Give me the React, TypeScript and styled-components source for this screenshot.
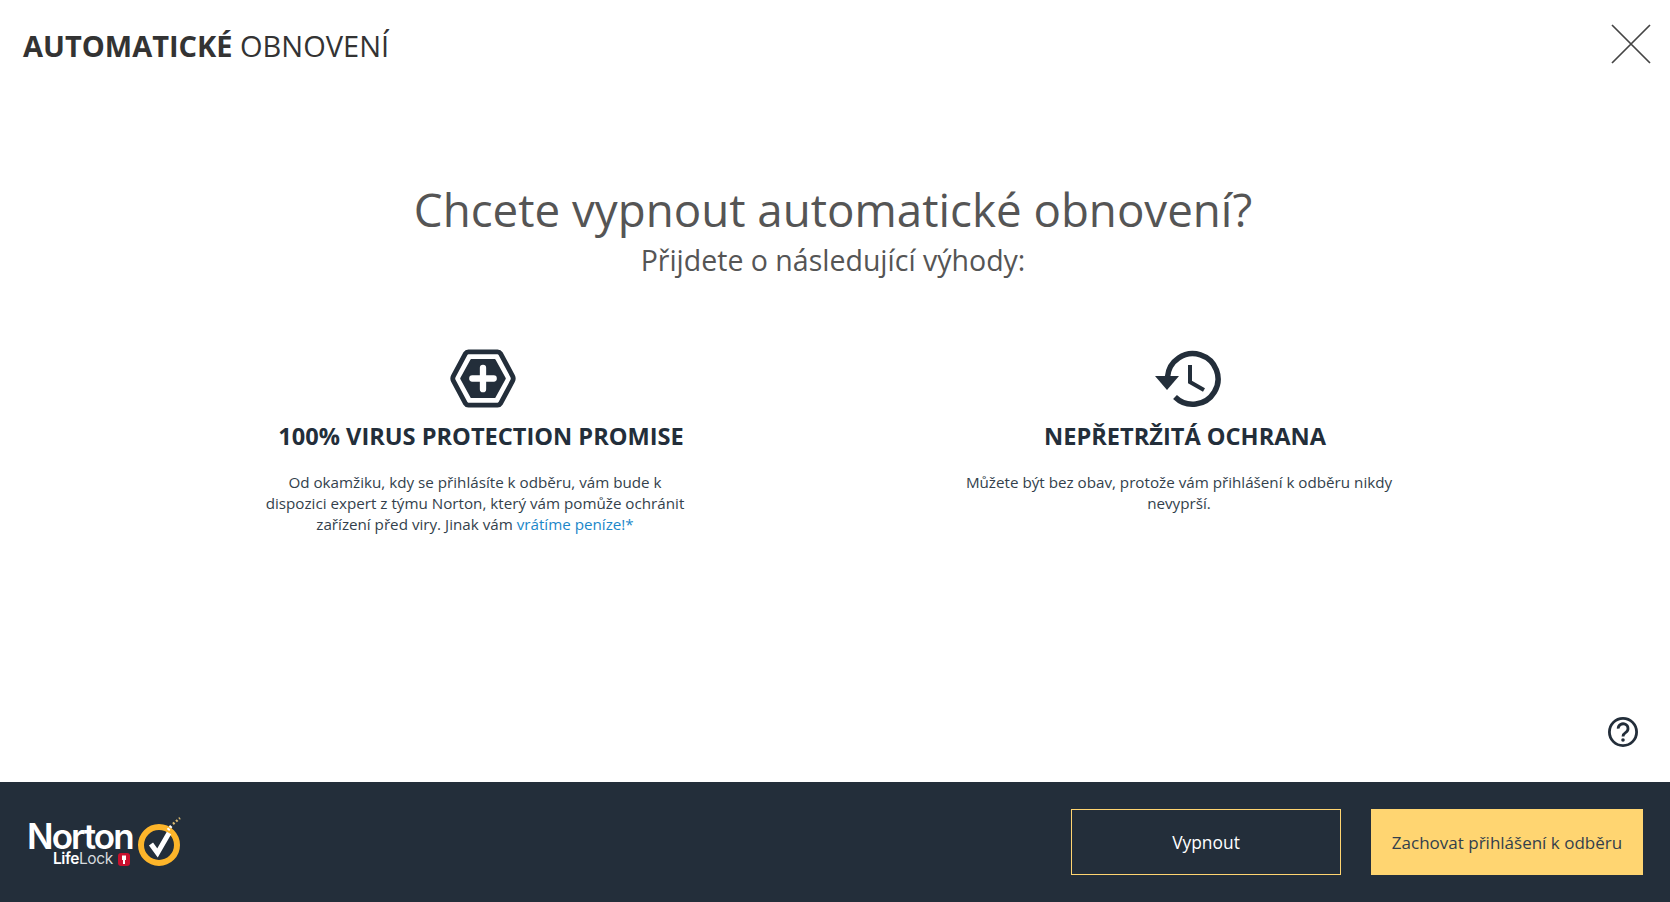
import styled, { createGlobalStyle } from 'styled-components';

const GlobalStyle = createGlobalStyle`
  html, body {
    margin: 0;
    padding: 0;
    background: #ffffff;
    font-family: 'Open Sans', 'Noto Sans', sans-serif;
  }
`;

export default function App() {
  return (
    <Page>
      <GlobalStyle />
      <Header>
        <PageTitle>
          <strong>AUTOMATICKÉ</strong> OBNOVENÍ
        </PageTitle>
        <CloseButton aria-label="Zavřít">
          <svg width="40" height="40" viewBox="0 0 40 40">
            <path d="M1 1 L39 39 M39 1 L1 39" stroke="#444" strokeWidth="1.7" fill="none" />
          </svg>
        </CloseButton>
      </Header>

      <Main>
        <Question>Chcete vypnout automatické obnovení?</Question>
        <SubQuestion>Přijdete o následující výhody:</SubQuestion>

        <Features>
          <Feature>
            <FeatureIcon $offset={3}>
              <svg width="66" height="61" viewBox="0 0 68 62">
                <path
                  d="M19 3.5 H49 Q51 3.5 52 5.2 L64.5 28.5 Q65.8 31 64.5 33.5 L52 56.8 Q51 58.5 49 58.5 H19 Q17 58.5 16 56.8 L3.5 33.5 Q2.2 31 3.5 28.5 L16 5.2 Q17 3.5 19 3.5 Z"
                  fill="none"
                  stroke="#232e3a"
                  strokeWidth="5"
                />
                <path
                  d="M22 12 H46 L56.5 31 L46 50 H22 L11.5 31 Z"
                  fill="#232e3a"
                  stroke="#232e3a"
                  strokeWidth="2"
                  strokeLinejoin="round"
                />
                <path d="M34 20 V42 M23 31 H45" stroke="#fff" strokeWidth="6.5" strokeLinecap="round" />
              </svg>
            </FeatureIcon>
            <FeatureTitle>100% VIRUS PROTECTION PROMISE</FeatureTitle>
            <FeatureText>
              Od okamžiku, kdy se přihlásíte k odběru, vám bude k dispozici expert z týmu Norton, který vám pomůže
              ochránit zařízení před viry. Jinak vám <TextLink href="#">vrátíme peníze!*</TextLink>
            </FeatureText>
          </Feature>
          <Feature>
            <FeatureIcon $offset={6}>
              <svg width="68" height="62" viewBox="0 0 68 62">
                <path
                  d="M13.5 29 A25.3 25.3 0 1 1 21 49"
                  fill="none"
                  stroke="#232e3a"
                  strokeWidth="5.5"
                />
                <path d="M1 28 H25 L13 42 Z" fill="#232e3a" />
                <path d="M36 17 V34 L50 42" fill="none" stroke="#232e3a" strokeWidth="4" />
              </svg>
            </FeatureIcon>
            <FeatureTitle>NEPŘETRŽITÁ OCHRANA</FeatureTitle>
            <FeatureText>
              Můžete být bez obav, protože vám přihlášení k odběru nikdy nevyprší.
            </FeatureText>
          </Feature>
        </Features>

        <HelpRow>
          <svg width="32" height="32" viewBox="0 0 32 32" aria-label="Nápověda">
            <circle cx="16" cy="16" r="13.6" fill="none" stroke="#232e3a" strokeWidth="2.8" />
            <path
              d="M11.2 12.6 A4.9 4.7 0 1 1 18.8 16.4 C17 17.6 16 18.4 16 20.4"
              fill="none"
              stroke="#232e3a"
              strokeWidth="2.8"
            />
            <circle cx="16" cy="24" r="1.8" fill="#232e3a" />
          </svg>
        </HelpRow>
      </Main>

      <Footer>
        <Logo>
          <LogoWords>
            <LogoNorton>Norton</LogoNorton>
            <LogoSub>
              <b>Life</b>Lock
              <LogoBadge>
                <svg width="6" height="9" viewBox="0 0 6 9">
                  <path d="M1 0.5 H5 V5 H4 V9 H2 V5 H1 Z" fill="#fff" />
                </svg>
              </LogoBadge>
            </LogoSub>
          </LogoWords>
          <svg width="48" height="50" viewBox="0 0 48 50">
            <circle cx="23" cy="29" r="18" fill="none" stroke="#fdb52a" strokeWidth="6" />
            <path d="M15 28 L21.5 37 L33 17" fill="none" stroke="#fff" strokeWidth="5" />
            <path d="M32 14 L36 9" stroke="#fff" strokeWidth="3" strokeDasharray="2 1.2" />
            <path d="M37 8 L44 2" stroke="#d9b870" strokeWidth="2.4" strokeDasharray="2 2" />
          </svg>
        </Logo>
        <Actions>
          <OutlineButton>Vypnout</OutlineButton>
          <SolidButton>Zachovat přihlášení k odběru</SolidButton>
        </Actions>
      </Footer>
    </Page>
  );
}

const Page = styled.div`
  width: 100%;
  height: 902px;
  display: flex;
  flex-direction: column;
  overflow: hidden;
`;

const Header = styled.header`
  height: 92px;
  display: flex;
  justify-content: space-between;
  align-items: flex-start;
  padding: 24px 19px 0 23px;
  box-sizing: border-box;
`;

const PageTitle = styled.h1`
  margin: 5px 0 0;
  font-size: 29px;
  line-height: 34px;
  font-weight: 400;
  color: #333333;

  strong {
    font-weight: 700;
  }
`;

const CloseButton = styled.button`
  padding: 0;
  width: 40px;
  height: 40px;
  border: 0;
  background: none;
`;

const Main = styled.main`
  flex: 1;
  display: flex;
  flex-direction: column;
  align-items: center;
  padding: 87px 4px 0 0;
`;

const Question = styled.h2`
  margin: 0;
  font-size: 45.7px;
  line-height: 60px;
  font-weight: 400;
  color: #555555;
`;

const SubQuestion = styled.p`
  margin: 3px 0 0;
  font-size: 28.5px;
  line-height: 37px;
  color: #555555;
`;

const Features = styled.div`
  margin-top: 69px;
  display: grid;
  grid-template-columns: 704px 704px;
`;

const Feature = styled.section`
  display: flex;
  flex-direction: column;
  align-items: center;
`;

const FeatureIcon = styled.div<{ $offset: number }>`
  height: 62px;
  margin-left: ${(props) => props.$offset}px;
  line-height: 0;
`;

const FeatureTitle = styled.h3`
  margin: 10px 0 0;
  font-size: 23.6px;
  line-height: 32px;
  font-weight: 700;
  color: #232e3a;
`;

const FeatureText = styled.p`
  margin: 20px 12px 0 0;
  width: 430px;
  font-size: 15.2px;
  line-height: 21px;
  text-align: center;
  color: #333f4c;
`;

const TextLink = styled.a`
  color: #1b87c9;
  text-decoration: none;
`;

const HelpRow = styled.div`
  margin-top: auto;
  align-self: flex-end;
  margin-bottom: 34px;
  margin-right: 27px;
  line-height: 0;
`;

const Footer = styled.footer`
  height: 120px;
  flex-shrink: 0;
  display: flex;
  justify-content: space-between;
  align-items: center;
  padding: 0 27px;
  box-sizing: border-box;
  background: #232e3a;
`;

const Logo = styled.div`
  display: flex;
  align-items: flex-end;
  gap: 3px;
  margin-top: -2px;
`;

const LogoWords = styled.div`
  display: flex;
  flex-direction: column;
  align-items: flex-end;
  color: #ffffff;
  font-family: 'Inter', 'Liberation Sans', sans-serif;
`;

const LogoNorton = styled.span`
  font-size: 35px;
  line-height: 30px;
  font-weight: 600;
  letter-spacing: -1.9px;
`;

const LogoSub = styled.span`
  display: flex;
  align-items: center;
  margin: 1px 3px 0 0;
  font-size: 15.5px;
  line-height: 14px;
  letter-spacing: -0.4px;
  color: #d8dbde;
  font-weight: 400;

  b {
    color: #ffffff;
    font-weight: 600;
  }
`;

const LogoBadge = styled.span`
  width: 12px;
  height: 13px;
  margin-left: 5px;
  display: flex;
  align-items: center;
  justify-content: center;
  border-radius: 3px;
  background: #c8102e;
`;

const Actions = styled.div`
  display: flex;
  gap: 30px;
`;

const OutlineButton = styled.button`
  width: 270px;
  height: 66px;
  padding: 0;
  border: 1px solid #ffd571;
  background: transparent;
  color: #ffffff;
  font-family: inherit;
  font-size: 17.4px;
`;

const SolidButton = styled.button`
  width: 272px;
  height: 66px;
  padding: 0;
  border: 0;
  background: #ffd571;
  color: #333f4c;
  font-family: inherit;
  font-size: 17px;
`;
